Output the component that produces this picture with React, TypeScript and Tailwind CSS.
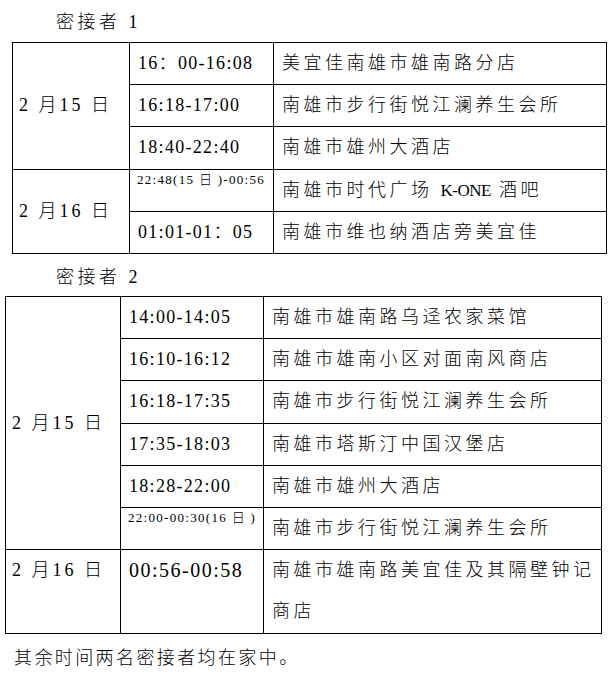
import React from 'react';

interface Visit {
  time: string;
  place: React.ReactNode;
  small?: boolean;
  big?: boolean;
}

interface DayGroup {
  date: string;
  top?: boolean;
  visits: Visit[];
}

const contact1: DayGroup[] = [
  {
    date: '2 月15 日',
    visits: [
      { time: '16：00-16:08', place: '美宜佳南雄市雄南路分店' },
      { time: '16:18-17:00', place: '南雄市步行街悦江澜养生会所' },
      { time: '18:40-22:40', place: '南雄市雄州大酒店' },
    ],
  },
  {
    date: '2 月16 日',
    visits: [
      {
        time: '22:48(15 日 )-00:56',
        small: true,
        place: (
          <>
            南雄市时代广场 <span className="tracking-[-0.5px] text-[17px]">K-ONE</span> 酒吧
          </>
        ),
      },
      { time: '01:01-01：05', place: '南雄市维也纳酒店旁美宜佳' },
    ],
  },
];

const contact2: DayGroup[] = [
  {
    date: '2 月15 日',
    visits: [
      { time: '14:00-14:05', place: '南雄市雄南路乌迳农家菜馆' },
      { time: '16:10-16:12', place: '南雄市雄南小区对面南风商店' },
      { time: '16:18-17:35', place: '南雄市步行街悦江澜养生会所' },
      { time: '17:35-18:03', place: '南雄市塔斯汀中国汉堡店' },
      { time: '18:28-22:00', place: '南雄市雄州大酒店' },
      { time: '22:00-00:30(16 日 )', small: true, place: '南雄市步行街悦江澜养生会所' },
    ],
  },
  {
    date: '2 月16 日',
    top: true,
    visits: [
      {
        time: '00:56-00:58',
        big: true,
        place: (
          <>
            南雄市雄南路美宜佳及其隔壁钟记
            <br />
            商店
          </>
        ),
      },
    ],
  },
];

function ContactTable({ groups, widths, className }: { groups: DayGroup[]; widths: number[]; className: string }) {
  return (
    <table className={`table-fixed border-collapse ${className}`}>
      <colgroup>
        {widths.map((w, i) => (
          <col key={i} style={{ width: w }} />
        ))}
      </colgroup>
      <tbody>
        {groups.map(group =>
          group.visits.map((v, i) => (
            <tr key={group.date + i}>
              {i === 0 && (
                <td
                  rowSpan={group.visits.length}
                  className={`border border-black pl-[6px] pr-0 py-0 text-[18px] leading-[41.2px] tracking-[3px] ${group.top ? 'align-top' : 'align-middle'}`}
                >
                  {group.date}
                </td>
              )}
              {v.small ? (
                <td className="border border-black px-[7px] pt-[2px] pb-0 align-top text-[13px] leading-[16px] tracking-[1.3px] whitespace-nowrap">
                  {v.time}
                </td>
              ) : (
                <td
                  className={`border border-black px-[8px] py-0 align-top leading-[41.2px] whitespace-nowrap ${v.big ? 'text-[20px] tracking-[1.5px]' : 'text-[18px] tracking-[1.3px]'}`}
                >
                  {v.time}
                </td>
              )}
              <td className="border border-black pl-[8px] pr-0 py-0 align-middle text-[18px] leading-[41.2px] tracking-[3.5px] whitespace-nowrap">
                {v.place}
              </td>
            </tr>
          ))
        )}
      </tbody>
    </table>
  );
}

export default function App() {
  return (
    <div className="w-[616px] h-[677px] bg-white text-black font-light font-['Liberation_Serif','Noto_Sans_CJK_SC',serif] overflow-hidden">
      <div className="pl-[56px] h-[42px] text-[18px] leading-[44px] tracking-[3.5px]">密接者 1</div>
      <ContactTable groups={contact1} widths={[117, 144, 333]} className="ml-[12px] w-[594px]" />
      <div className="pl-[56px] h-[42px] text-[18px] leading-[46px] tracking-[3.5px]">密接者 2</div>
      <ContactTable groups={contact2} widths={[115, 143, 338]} className="ml-[5px] w-[596px]" />
      <div className="pl-[14px] pt-[2px] text-[18px] leading-[44px] tracking-[2.4px]">其余时间两名密接者均在家中。</div>
    </div>
  );
}
